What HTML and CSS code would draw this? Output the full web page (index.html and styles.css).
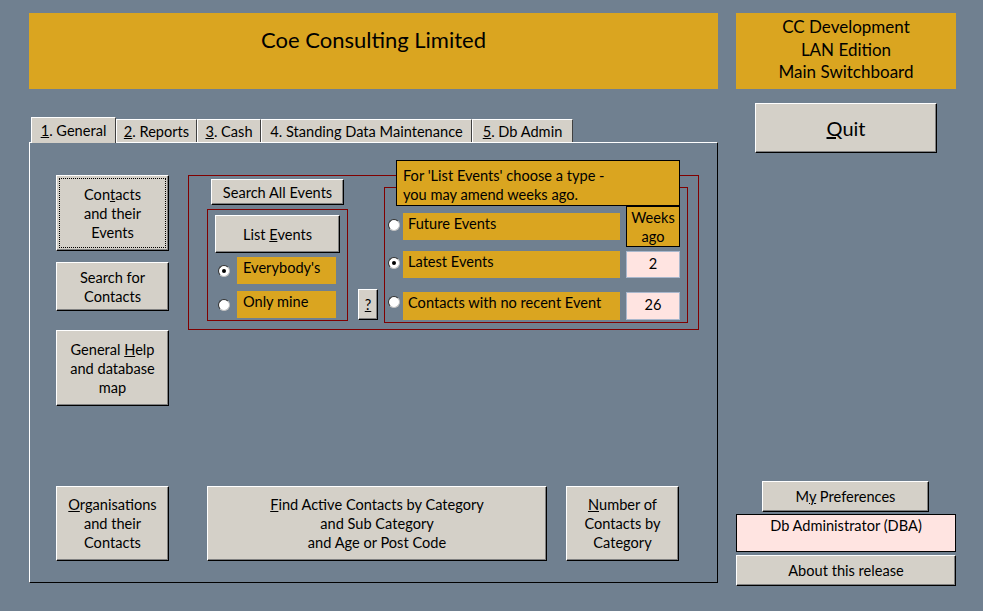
FILE: index.html
```html
<!DOCTYPE html>
<html>
<head>
    <link rel="stylesheet" href="styles.css">
</head>
<body>
<div class="screen">
    <div class="main-col">
        <div class="title-bar">Coe Consulting Limited</div>

        <div class="tabs">
            <div class="tab tab-on tab-1"><span><u>1</u>. General</span></div>
            <div class="tab tab-2"><span><u>2</u>. Reports</span></div>
            <div class="tab tab-3"><span><u>3</u>. Cash</span></div>
            <div class="tab tab-4"><span>4. Standing Data Maintenance</span></div>
            <div class="tab tab-5"><span><u>5</u>. Db Admin</span></div>
        </div>

        <div class="panel">
            <div class="panel-top">
                <div class="left-buttons">
                    <button class="btn btn-tall btn-focus"><span>Con<u>t</u>acts<br>and their<br>Events</span></button>
                    <button class="btn btn-search"><span>Search for<br>Contacts</span></button>
                    <button class="btn btn-tall btn-help-map"><span>General <u>H</u>elp<br>and database<br>map</span></button>
                </div>

                <div class="events-frame">
                    <div class="note">For 'List Events' choose a type -<br>you may amend weeks ago.</div>

                    <div class="all-col">
                        <button class="btn btn-all"><span>Search All Events</span></button>
                        <div class="who-frame">
                            <button class="btn btn-list"><span>List <u>E</u>vents</span></button>
                            <div class="who-row first">
                                <span class="radio on"></span>
                                <span class="opt opt-who">Everybody's</span>
                            </div>
                            <div class="who-row second">
                                <span class="radio"></span>
                                <span class="opt opt-who">Only mine</span>
                            </div>
                        </div>
                    </div>

                    <button class="btn btn-q"><span><u>?</u></span></button>

                    <div class="type-frame">
                        <span class="radio r1"></span>
                        <span class="opt opt-type t1">Future Events</span>
                        <div class="weeks-head">Weeks<br>ago</div>

                        <span class="radio on r2"></span>
                        <span class="opt opt-type">Latest Events</span>
                        <div class="wk">2</div>

                        <span class="radio r3"></span>
                        <span class="opt opt-type t3">Contacts with no recent Event</span>
                        <div class="wk t3">26</div>
                    </div>
                </div>
            </div>

            <div class="panel-bottom">
                <button class="btn btn-org"><span><u>O</u>rganisations<br>and their<br>Contacts</span></button>
                <button class="btn btn-find"><span><u>F</u>ind Active Contacts by Category<br>and Sub Category<br>and Age or Post Code</span></button>
                <button class="btn btn-num"><span><u>N</u>umber of<br>Contacts by<br>Category</span></button>
            </div>
        </div>
    </div>

    <div class="side-col">
        <div class="side-title">CC Development<br>LAN Edition<br>Main Switchboard</div>
        <button class="btn btn-quit"><span><u>Q</u>uit</span></button>

        <div class="side-bottom">
            <button class="btn btn-prefs"><span>M<u>y</u> Preferences</span></button>
            <div class="user-box">Db Administrator (DBA)</div>
            <button class="btn btn-about"><span>About this release</span></button>
        </div>
    </div>
</div>
</body>
</html>
```

FILE: styles.css
```css
* {
    box-sizing: border-box;
}

body {
    margin: 0;
    height: 611px;
    overflow: hidden;
    background-color: #708090;
    font-family: Lato, "Liberation Sans", sans-serif;
    font-size: 14.6px;
    color: #000;
}

.screen {
    display: flex;
    gap: 18px;
    height: 611px;
    padding: 13px 0 0 29px;
}

/* left side: title, tabs, tab page */

.main-col {
    width: 689px;
    display: flex;
    flex-direction: column;
}

.title-bar {
    height: 76px;
    padding-top: 13px;
    background-color: #daa520;
    text-align: center;
    font-size: 22px;
    line-height: 28px;
}

.tabs {
    display: flex;
    align-items: flex-end;
    height: 25px;
    margin-top: 28px;
    padding-left: 2px;
    position: relative;
    z-index: 1;
}

.tab {
    height: 23px;
    display: flex;
    align-items: center;
    justify-content: center;
    background-color: #d4d0c8;
    border-top: 1px solid #fff;
    border-left: 1px solid #fff;
    border-right: 1px solid #404040;
    white-space: nowrap;
}

.tab-on {
    height: 26px;
    margin-bottom: -1px;
    padding-bottom: 1px;
}

.tab-1 { width: 85px; }
.tab-2 { width: 81px; }
.tab-3 { width: 64px; }
.tab-4 { width: 211px; }
.tab-5 { width: 101px; }

.panel {
    height: 441px;
    display: flex;
    flex-direction: column;
    justify-content: space-between;
    padding: 32px 0 21px 26px;
    border-top: 1px solid #fff;
    border-left: 1px solid #fff;
    border-right: 1px solid #000;
    border-bottom: 1px solid #000;
}

.panel-top {
    display: flex;
    align-items: flex-start;
    gap: 19px;
}

/* buttons */

.btn {
    display: flex;
    align-items: center;
    justify-content: center;
    padding: 0;
    background-color: #d4d0c8;
    border: 1px solid;
    border-color: #fff #000 #000 #fff;
    box-shadow: inset -1px -1px #808080;
    font: inherit;
    color: #000;
    line-height: 19px;
    text-align: center;
}

.left-buttons {
    width: 113px;
    display: flex;
    flex-direction: column;
}

.btn-tall {
    height: 76px;
}

.btn-focus {
    outline: 1px dotted #000;
    outline-offset: -4px;
}

.btn-search {
    height: 49px;
    margin-top: 11px;
}

.btn-help-map {
    margin-top: 19px;
}

/* events frame */

.events-frame {
    position: relative;
    width: 511px;
    height: 155px;
    display: flex;
    align-items: flex-start;
    padding: 3px 0 0 18px;
    border: 1px solid #800000;
}

.note {
    position: absolute;
    left: 207px;
    top: -16px;
    width: 284px;
    height: 46px;
    padding: 5px 0 0 6px;
    background-color: #daa520;
    border: 1px solid #000;
    line-height: 19px;
    z-index: 2;
}

.all-col {
    width: 141px;
    display: flex;
    flex-direction: column;
}

.btn-all {
    width: 133px;
    height: 26px;
    margin-left: 4px;
}

.who-frame {
    width: 141px;
    height: 112px;
    margin-top: 4px;
    padding: 5px 0 0 7px;
    border: 1px solid #800000;
}

.btn-list {
    width: 125px;
    height: 38px;
}

.who-row {
    display: flex;
    align-items: center;
    gap: 7px;
    padding-left: 3px;
}

.who-row.first {
    margin-top: 4px;
}

.who-row.second {
    margin-top: 7px;
}

.opt {
    background-color: #daa520;
    padding: 1px 0 0 6px;
    line-height: 19px;
    white-space: nowrap;
}

.opt-who {
    width: 99px;
    height: 27px;
}

.radio {
    width: 12px;
    height: 12px;
    border-radius: 50%;
    background-color: #fff;
    border: 1px solid #303030;
    border-right-color: #c0c0c0;
    border-bottom-color: #c0c0c0;
    display: flex;
    align-items: center;
    justify-content: center;
}

.radio.on::after {
    content: "";
    width: 4px;
    height: 4px;
    border-radius: 50%;
    background-color: #000;
}

.btn-q {
    width: 20px;
    height: 31px;
    margin: 110px 0 0 10px;
}

.type-frame {
    width: 304px;
    height: 136px;
    margin: 8px 0 0 6px;
    padding: 18px 7px 0 3px;
    border: 1px solid #800000;
    display: grid;
    grid-template-columns: 15px 223px 54px;
    grid-template-rows: 45px 41px 28px;
    align-items: start;
}

.opt-type {
    width: 217px;
    height: 27px;
    padding-left: 5px;
}

.opt-type.t1 {
    margin-top: 7px;
}

.opt-type.t3 {
    height: 28px;
}

.radio.r1 { margin-top: 13px; }
.radio.r2 { margin-top: 6px; }
.radio.r3 { margin-top: 4px; }

.weeks-head {
    height: 41px;
    background-color: #daa520;
    border: 1px solid #000;
    text-align: center;
    line-height: 19px;
    padding-top: 1px;
}

.wk {
    height: 27px;
    background-color: #ffe4e1;
    border: 1px solid #a9b7cc;
    text-align: center;
    line-height: 19px;
    padding-top: 2px;
}

.wk.t3 {
    height: 28px;
}

/* bottom row of the page */

.panel-bottom {
    display: flex;
    height: 75px;
}

.btn-org,
.btn-num {
    width: 113px;
}

.btn-find {
    width: 340px;
    margin-left: 38px;
}

.btn-num {
    margin-left: 19px;
}

/* right side */

.side-col {
    width: 220px;
    display: flex;
    flex-direction: column;
}

.side-title {
    height: 76px;
    padding-top: 3px;
    background-color: #daa520;
    text-align: center;
    font-size: 17px;
    line-height: 22.5px;
}

.btn-quit {
    width: 182px;
    height: 50px;
    margin: 14px 0 0 19px;
    font-size: 20px;
}

.side-bottom {
    margin-top: auto;
    margin-bottom: 25px;
    display: flex;
    flex-direction: column;
}

.btn-prefs {
    width: 167px;
    height: 31px;
    margin-left: 26px;
}

.user-box {
    height: 38px;
    margin-top: 2px;
    padding-top: 1px;
    background-color: #ffe4e1;
    border: 1px solid #000;
    text-align: center;
    line-height: 19px;
}

.btn-about {
    height: 31px;
    margin-top: 3px;
}
```
